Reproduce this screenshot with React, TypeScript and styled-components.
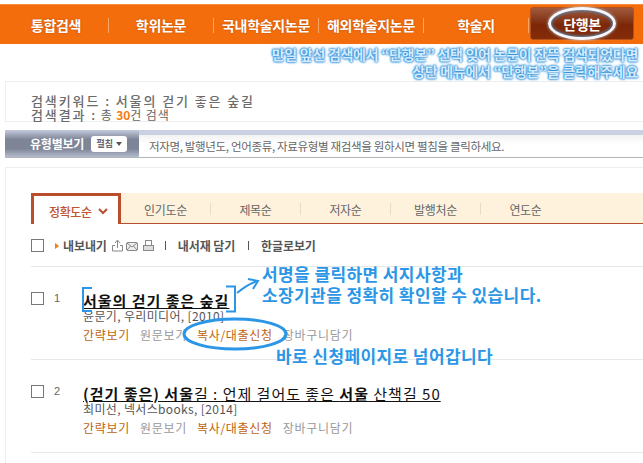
import React, { FunctionComponent } from 'react';
import styled, { createGlobalStyle } from 'styled-components';

const GlobalStyle = createGlobalStyle`
  html, body {
    margin: 0;
    padding: 0;
    background: #fff;
    overflow: hidden;
  }
  * { box-sizing: border-box; }
`;

const FONT = `"Noto Sans CJK KR", "Noto Sans", sans-serif`;
const ANNOTATION = '#2b96e6';

const Page = styled.div`
  position: relative;
  width: 643px;
  height: 463px;
  overflow: hidden;
  font-family: ${FONT};
  color: #666;
`;

const TopNav = styled.nav`
  margin-top: 4px;
  height: 40px;
  padding: 1px 9px 0 4px;
  background: #f36d0d;
  border-top: 1px solid #f98c3c;
  display: grid;
  grid-template-columns: repeat(6, 105px);
  align-items: center;
`;

const NavItem = styled.a`
  height: 15px;
  display: flex;
  align-items: center;
  justify-content: center;
  border-right: 1px solid #f9a566;
  color: #fff;
  font-size: 14px;
  font-weight: 700;
  letter-spacing: -0.3px;
  text-shadow: 0 0 2px rgba(150, 60, 0, 0.6);
`;

const ActiveNavItem = styled.a`
  height: 33px;
  margin-top: -3px;
  margin-left: 1px;
  display: flex;
  align-items: center;
  justify-content: center;
  background: linear-gradient(#a05a3e, #7c2708 55%, #852c08);
  border: 1px solid #b34f1a;
  border-radius: 3px;
`;

const ActiveLabel = styled.span`
  width: 68px;
  height: 33px;
  display: flex;
  align-items: center;
  justify-content: center;
  border: 3px solid #f4f7fb;
  border-radius: 50%;
  box-shadow: inset 0 0 3px 1px #4d86b8, 0 0 3px #b5d3ec;
  color: #fff;
  font-size: 14px;
  font-weight: 700;
  letter-spacing: -0.3px;
`;

const Notice = styled.div`
  height: 37px;
  padding: 2px 5px 0 0;
  text-align: right;
  color: #d6ecfc;
  font-size: 14px;
  font-weight: 700;
  line-height: 17px;
  letter-spacing: -0.28px;
  text-shadow: 0 0 2px #1f86d8, 0 0 2px #1f86d8, 0 0 3px #1f86d8;
`;

const SummaryBox = styled.section`
  height: 41px;
  margin-left: 5px;
  padding: 12px 0 0 25px;
  border: 1px solid #eee;
  border-right: 0;
  font-size: 12px;
  line-height: 14px;
  letter-spacing: 0.9px;
`;

const SummaryLine = styled.div`
  height: 14px;
  white-space: nowrap;
`;

const SummaryLabel = styled.strong`
  font-size: 13px;
  font-weight: 500;
  color: #6b6b6b;
  letter-spacing: 1.9px;
`;

const Count = styled.strong`
  color: #f47c14;
  font-weight: 700;
  letter-spacing: 0;
`;

const FilterBar = styled.section`
  height: 28px;
  margin: 8px 0 0 5px;
  display: flex;
  background: #c9d1e2;
  border-bottom: 1px solid #b5b5b5;
  padding-top: 5px;
`;

const FilterHead = styled.div`
  width: 134px;
  margin-top: -5px;
  padding: 0 0 0 25px;
  display: flex;
  align-items: center;
  gap: 7px;
  background: linear-gradient(#c4cbdd, #7e8597 35%, #7e8597 70%, #b4bccf);
`;

const FilterTitle = styled.span`
  color: #fff;
  font-size: 12px;
  font-weight: 700;
  letter-spacing: -0.2px;
`;

const FoldButton = styled.button`
  width: 36px;
  height: 16px;
  padding: 0;
  border: 0;
  border-radius: 3px;
  background: #fff;
  color: #667;
  display: flex;
  align-items: center;
  justify-content: center;
  gap: 3px;
  font-family: ${FONT};
  font-size: 9px;
  font-weight: 700;
`;

const FoldCaret = styled.i`
  width: 0;
  height: 0;
  border: 3.5px solid transparent;
  border-top: 4px solid #555;
  border-bottom: 0;
`;

const FilterHint = styled.div`
  flex: 1;
  padding-left: 10px;
  display: flex;
  align-items: center;
  background: linear-gradient(#f2f2f2, #fff 40%);
  font-size: 11.5px;
  letter-spacing: -0.33px;
  color: #666;
  white-space: nowrap;
`;

const ResultPanel = styled.section`
  margin: 9px 0 0 5px;
  height: 296px;
  padding: 25px 0 0 25px;
  border-top: 1px solid #eee;
  border-left: 1px solid #eee;
`;

const SortTabs = styled.div`
  height: 31px;
  display: flex;
  background: #fff2dd;
  border-bottom: 1px solid #b94e2c;
`;

const ActiveTab = styled.div`
  width: 90px;
  height: 31px;
  padding: 3px 0 0 15px;
  display: flex;
  align-items: center;
  gap: 6px;
  background: #fff;
  border: 3px solid #b94e2c;
  border-bottom: 0;
  color: #c0532f;
  font-size: 12px;
  font-weight: 500;
  letter-spacing: -0.4px;
`;

const SortTab = styled.div<{ $last?: boolean }>`
  width: 90px;
  height: 12px;
  margin-top: 10px;
  display: flex;
  align-items: center;
  justify-content: center;
  border-right: 1px solid ${(p) => (p.$last ? 'transparent' : '#e8dcc6')};
  color: #666;
  font-size: 12px;
  letter-spacing: -0.3px;
`;

const Toolbar = styled.div`
  height: 43px;
  padding-top: 1px;
  display: flex;
  align-items: center;
  border-bottom: 1px solid #e6e6e6;
  font-size: 12px;
  font-weight: 700;
  color: #555;
`;

const CheckBox = styled.span`
  flex: none;
  width: 13px;
  height: 13px;
  border: 1px solid #777;
  background: #fff;
`;

const Marker = styled.i`
  width: 0;
  height: 0;
  margin: 0 4px 0 11px;
  border: 3px solid transparent;
  border-left: 4px solid #f47c14;
  border-right: 0;
`;

const ToolIcons = styled.span`
  margin: 0 10px 0 4px;
  display: flex;
  align-items: center;
`;

const ToolSeparator = styled.span`
  width: 1px;
  height: 9px;
  margin-right: 12px;
  background: #555;
`;

const ToolLabel = styled.span<{ $gapRight?: number }>`
  margin-right: ${(p) => p.$gapRight ?? 0}px;
  letter-spacing: -0.1px;
  white-space: nowrap;
`;

const ResultRow = styled.article`
  height: 93px;
  padding-top: 25px;
  display: flex;
  border-bottom: 1px solid #e8e8e8;
`;

const RowNumber = styled.span`
  width: 39px;
  padding-left: 10px;
  font-size: 11px;
  line-height: 13px;
  font-family: "Liberation Sans", sans-serif;
`;

const RowBody = styled.div`
  min-width: 0;
`;

const BookTitle = styled.a`
  display: block;
  height: 16px;
  margin-top: 1px;
  font-size: 15px;
  line-height: 16px;
  color: #111;
  letter-spacing: 1px;
  white-space: nowrap;
  text-decoration: underline;
  text-underline-offset: 1px;
`;

const BookMeta = styled.div`
  height: 14px;
  font-size: 12px;
  line-height: 14px;
  letter-spacing: 0.35px;
  color: #555;
  white-space: nowrap;
`;

const ActionRow = styled.div`
  margin-top: 4px;
  display: flex;
  gap: 10px;
`;

const Action = styled.a<{ $accent?: boolean }>`
  font-size: 12px;
  line-height: 15px;
  letter-spacing: 0.7px;
  color: ${(p) => (p.$accent ? '#c0630f' : '#999')};
  white-space: nowrap;
`;

const Callout = styled.div<{ $left: number; $top: number }>`
  position: absolute;
  left: ${(p) => p.$left}px;
  top: ${(p) => p.$top}px;
  color: ${ANNOTATION};
  font-size: 17px;
  font-weight: 700;
  line-height: 21px;
  letter-spacing: 0.4px;
  white-space: nowrap;
`;

const Markup = styled.svg`
  position: absolute;
  left: 0;
  top: 0;
  pointer-events: none;
`;

const NAV_ITEMS = ['통합검색', '학위논문', '국내학술지논문', '해외학술지논문', '학술지'];
const SORT_ITEMS = ['인기도순', '제목순', '저자순', '발행처순', '연도순'];

const BOOKS = [
  { title: <><b>서울의 걷기 좋은 숲길</b></>, meta: '윤문기, 우리미디어, [2010]' },
  {
    title: <><b>(걷기 좋은) 서울</b>길 : 언제 걸어도 좋은 <b>서울</b> 산책길 50</>,
    meta: '최미선, 넥서스books, [2014]',
  },
];

const ToolGlyphs: FunctionComponent = () => (
  <svg width="44" height="13" viewBox="0 0 44 13" fill="none" stroke="#888" strokeWidth="1">
    <path d="M1.5 6.5v5.5h10V6.5H9M4 6.5H1.5M6.5 9V2M4 4l2.5-3L9 4" />
    <rect x="15.5" y="3.5" width="11" height="8" rx="1.5" fill="#eee" />
    <path d="M16 4l5 4 5-4M16 11l3.5-4M26 11l-3.5-4" />
    <rect x="34.5" y="1.5" width="6" height="5" fill="#fff" />
    <rect x="32.5" y="6.5" width="10" height="5" fill="#ddd" />
  </svg>
);

const App: FunctionComponent = () => {
  return (
    <Page>
      <GlobalStyle />
      <TopNav>
        {NAV_ITEMS.map((item) => (
          <NavItem key={item}>{item}</NavItem>
        ))}
        <ActiveNavItem>
          <ActiveLabel>단행본</ActiveLabel>
        </ActiveNavItem>
      </TopNav>

      <Notice>
        만일 앞선 검색에서 “단행본” 선택 잊어 논문이 잔뜩 검색되었다면
        <br />
        상단 메뉴에서 “단행본”을 클릭해주세요
      </Notice>

      <SummaryBox>
        <SummaryLine>
          <SummaryLabel>검색키워드 : 서울의 걷기 좋은 숲길</SummaryLabel>
        </SummaryLine>
        <SummaryLine>
          <SummaryLabel>검색결과 :</SummaryLabel> 총 <Count>30</Count>건 검색
        </SummaryLine>
      </SummaryBox>

      <FilterBar>
        <FilterHead>
          <FilterTitle>유형별보기</FilterTitle>
          <FoldButton>
            펼침
            <FoldCaret />
          </FoldButton>
        </FilterHead>
        <FilterHint>저자명, 발행년도, 언어종류, 자료유형별 재검색을 원하시면 펼침을 클릭하세요.</FilterHint>
      </FilterBar>

      <ResultPanel>
        <SortTabs>
          <ActiveTab>
            정확도순
            <svg width="10" height="7" viewBox="0 0 10 7" fill="none" stroke="#b94e2c" strokeWidth="2">
              <path d="M1 1l4 4 4-4" />
            </svg>
          </ActiveTab>
          {SORT_ITEMS.map((item, index) => (
            <SortTab key={item} $last={index === SORT_ITEMS.length - 1}>
              {item}
            </SortTab>
          ))}
        </SortTabs>

        <Toolbar>
          <CheckBox />
          <Marker />
          <ToolLabel>내보내기</ToolLabel>
          <ToolIcons>
            <ToolGlyphs />
          </ToolIcons>
          <ToolSeparator />
          <ToolLabel $gapRight={13}>내서재 담기</ToolLabel>
          <ToolSeparator />
          <ToolLabel>한글로보기</ToolLabel>
        </Toolbar>

        {BOOKS.map((book, index) => (
          <ResultRow key={book.meta}>
            <CheckBox />
            <RowNumber>{index + 1}</RowNumber>
            <RowBody>
              <BookTitle>{book.title}</BookTitle>
              <BookMeta>{book.meta}</BookMeta>
              <ActionRow>
                <Action $accent>간략보기</Action>
                <Action>원문보기</Action>
                <Action $accent>복사/대출신청</Action>
                <Action>장바구니담기</Action>
              </ActionRow>
            </RowBody>
          </ResultRow>
        ))}
      </ResultPanel>

      <Markup width="643" height="463" viewBox="0 0 643 463" fill="none" stroke={ANNOTATION} strokeWidth="2">
        <path d="M92 288H83v23h9" />
        <path d="M226 286.5h9v25h-9" />
        <path d="M237 293c6-5 12-9 20-12" />
        <path d="M248 279l10 2-5 8" />
        <ellipse cx="235" cy="334" rx="51" ry="15" strokeWidth="3" />
      </Markup>

      <Callout $left={262} $top={263}>
        서명을 클릭하면 서지사항과
        <br />
        소장기관을 정확히 확인할 수 있습니다.
      </Callout>
      <Callout $left={276} $top={345}>바로 신청페이지로 넘어갑니다</Callout>
    </Page>
  );
};

export default App;
